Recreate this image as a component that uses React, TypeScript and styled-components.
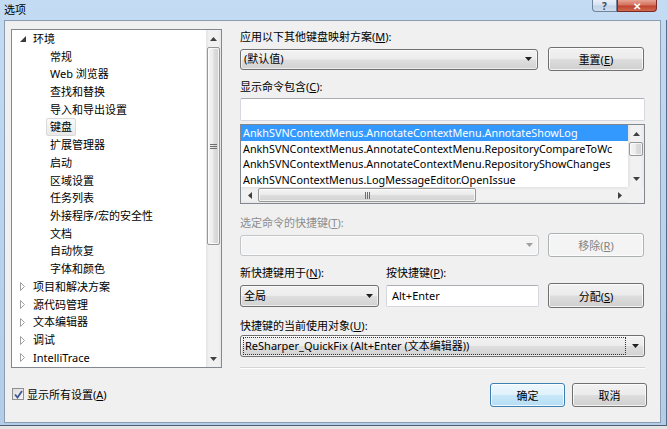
import React from "react";
import styled, { createGlobalStyle, css } from "styled-components";

const Global = createGlobalStyle`
  html, body { margin: 0; padding: 0; background: #fff; }
  body { font-family: "Noto Sans", "Noto Sans CJK SC", sans-serif; font-size: 11px; color: #000; }
  * { box-sizing: border-box; }
`;

const Window = styled.div`
  width: 667px;
  height: 429px;
  display: flex;
  flex-direction: column;
  background: linear-gradient(180deg, #c3dbf3 0%, #bcd5ee 40%, #b3cde8 100%);
  overflow: hidden;
`;

const TitleBar = styled.div`
  height: 20px;
  display: flex;
  align-items: flex-start;
  padding-left: 4px;
`;

const Title = styled.div`
  line-height: 20px;
  font-size: 11px;
  color: #000;
  flex: 1;
`;

const CaptionButton = styled.div<{ $close?: boolean }>`
  height: 12px;
  width: ${(p) => (p.$close ? 40 : 25)}px;
  display: flex;
  align-items: center;
  justify-content: center;
  border: 1px solid ${(p) => (p.$close ? "#7a2a24" : "#6f849c")};
  border-top: none;
  border-radius: ${(p) => (p.$close ? "0 0 4px 0" : "0 0 0 4px")};
  background: ${(p) =>
    p.$close
      ? "linear-gradient(180deg, #e8a493 0%, #d2725f 45%, #c14431 55%, #d06a4e 100%)"
      : "linear-gradient(180deg, #e9f0f8 0%, #d6e3f1 45%, #c3d4e8 55%, #cfdcec 100%)"};
  color: ${(p) => (p.$close ? "#fff" : "#3c4a5c")};
  font-size: 10px;
  font-weight: bold;
  line-height: 1;
`;

const CaptionGroup = styled.div`
  display: flex;
  margin-right: 10px;
`;

const Middle = styled.div`
  flex: 1;
  display: flex;
`;

const LeftFrame = styled.div`
  width: 4px;
`;

const RightFrame = styled.div`
  width: 6px;
  border-right: 1px solid #566b86;
`;

const BottomEdge = styled.div`
  height: 4px;
  border-top: 1px solid #4e5f74;
  background: #e4e4e4;
`;

const Client = styled.div`
  flex: 1;
  margin-bottom: 2px;
  background: #f0f0f0;
  border: 1px solid #8b9db3;
  padding: 8px 15px 0 6px;
  display: flex;
  gap: 18px;
`;

const LeftCol = styled.div`
  width: 211px;
  display: flex;
  flex-direction: column;
`;

const RightCol = styled.div`
  width: 405px;
  display: flex;
  flex-direction: column;
`;

/* ---------- Tree ---------- */
const TreeBox = styled.div`
  width: 211px;
  height: 339px;
  border: 1px solid #828790;
  background: #fff;
  display: flex;
`;

const TreeList = styled.div`
  flex: 1;
  overflow: hidden;
`;

const TreeRow = styled.div<{ $level: number }>`
  height: 17.72px;
  display: flex;
  align-items: center;
  padding-left: ${(p) => (p.$level === 0 ? 8 : 34)}px;
  white-space: nowrap;
`;

const Expander = styled.span`
  width: 9px;
  height: 10px;
  display: inline-flex;
  align-items: center;
`;

const TreeText = styled.span<{ $selected?: boolean }>`
  padding: 0 3px;
  line-height: 16px;
  border: 1px solid transparent;
  border-radius: 2px;
  ${(p) =>
    p.$selected &&
    css`
      border-color: #d9d9d9;
      background: linear-gradient(180deg, #fafafa 0%, #e8e8e8 100%);
    `}
`;

/* ---------- Scrollbars ---------- */
const VScroll = styled.div<{ $w: number }>`
  width: ${(p) => p.$w}px;
  display: flex;
  flex-direction: column;
  background: linear-gradient(90deg, #e3e3e3 0%, #f1f1f1 20%, #f1f1f1 80%, #e8e8e8 100%);
`;

const HScroll = styled.div`
  height: 16px;
  flex: 1;
  display: flex;
  align-items: stretch;
  background: linear-gradient(180deg, #e3e3e3 0%, #f1f1f1 20%, #f1f1f1 80%, #e8e8e8 100%);
`;

const ArrowCell = styled.div<{ $size?: number }>`
  width: ${(p) => (p.$size ? `${p.$size}px` : "auto")};
  height: ${(p) => (p.$size ? "auto" : "17px")};
  display: flex;
  align-items: center;
  justify-content: center;
  flex-shrink: 0;
`;

const Spacer = styled.div`
  flex: 1;
`;

const VThumb = styled.div<{ $h: number }>`
  height: ${(p) => p.$h}px;
  margin: 0 1px;
  border: 1px solid #979797;
  border-radius: 2px;
  background: linear-gradient(90deg, #f4f4f4 0%, #ececec 45%, #dcdcdc 55%, #d3d3d3 100%);
  box-shadow: inset 0 0 0 1px rgba(255, 255, 255, 0.7);
  display: flex;
  align-items: center;
  justify-content: center;
  flex-shrink: 0;
`;

const HThumb = styled.div<{ $w: number }>`
  width: ${(p) => p.$w}px;
  margin: 1px 0;
  border: 1px solid #979797;
  border-radius: 2px;
  background: linear-gradient(180deg, #f4f4f4 0%, #ececec 45%, #dcdcdc 55%, #d3d3d3 100%);
  box-shadow: inset 0 0 0 1px rgba(255, 255, 255, 0.7);
  display: flex;
  align-items: center;
  justify-content: center;
  flex-shrink: 0;
`;

const Corner = styled.div`
  width: 16px;
  height: 16px;
  background: #f0f0f0;
`;

/* ---------- Right controls ---------- */
const Label = styled.div<{ $mt: number; $disabled?: boolean }>`
  height: 16px;
  line-height: 16px;
  margin-top: ${(p) => p.$mt}px;
  white-space: nowrap;
  color: ${(p) => (p.$disabled ? "#8d8d8d" : "#000")};
`;

const LabelRow = styled.div<{ $mt: number }>`
  display: flex;
  margin-top: ${(p) => p.$mt}px;
`;

const FieldRow = styled.div<{ $mt: number; $h: number }>`
  display: flex;
  align-items: center;
  margin-top: ${(p) => p.$mt}px;
  height: ${(p) => p.$h}px;
  gap: 7px;
`;

const Combo = styled.div<{ $w: number; $h?: number; $disabled?: boolean }>`
  width: ${(p) => p.$w}px;
  height: ${(p) => p.$h ?? 22}px;
  display: flex;
  align-items: center;
  border: 1px solid ${(p) => (p.$disabled ? "#c3c6c9" : "#707070")};
  border-radius: 3px;
  background: ${(p) =>
    p.$disabled
      ? "#f4f4f4"
      : "linear-gradient(180deg, #f3f3f3 0%, #ececec 48%, #dedede 52%, #d2d2d2 100%)"};
  box-shadow: inset 0 0 0 1px rgba(255, 255, 255, 0.6);
  padding-left: 3px;
  flex-shrink: 0;
`;

const ComboText = styled.div<{ $focus?: boolean }>`
  flex: 1;
  white-space: nowrap;
  overflow: hidden;
  line-height: 16px;
  ${(p) =>
    p.$focus &&
    css`
      margin: 2px 0 2px -1px;
      padding-left: 1px;
      border: 1px dotted #333;
    `}
`;

const ComboArrow = styled.div`
  width: 18px;
  display: flex;
  align-items: center;
  justify-content: center;
`;

const TextBox = styled.div<{ $w: number; $h: number }>`
  width: ${(p) => p.$w}px;
  height: ${(p) => p.$h}px;
  background: #fff;
  border: 1px solid #d5d8de;
  border-top-color: #abadb3;
  border-radius: 2px;
  display: flex;
  align-items: center;
  padding-left: 5px;
  flex-shrink: 0;
`;

const Btn = styled.div<{ $w: number; $h?: number; $disabled?: boolean; $default?: boolean }>`
  width: ${(p) => p.$w}px;
  height: ${(p) => p.$h ?? 24}px;
  display: flex;
  align-items: center;
  justify-content: center;
  border: 1px solid #707070;
  border-radius: 3px;
  background: linear-gradient(180deg, #f2f2f2 0%, #ebebeb 48%, #dddddd 52%, #cfcfcf 100%);
  box-shadow: inset 0 0 0 1px rgba(255, 255, 255, 0.75);
  flex-shrink: 0;
  ${(p) =>
    p.$disabled &&
    css`
      border-color: #adb2b5;
      background: #f4f4f4;
      color: #838383;
    `}
  ${(p) =>
    p.$default &&
    css`
      border-color: #3c7fb1;
      background: linear-gradient(180deg, #eef8fd 0%, #dff1fb 48%, #c8e8f9 52%, #b5ddf3 100%);
      box-shadow: inset 0 0 0 1px rgba(255, 255, 255, 0.8);
    `}
`;

const ListBox = styled.div`
  margin-top: 3px;
  height: 80px;
  border: 1px solid #828790;
  background: #fff;
  display: flex;
  flex-direction: column;
`;

const ListTop = styled.div`
  flex: 1;
  display: flex;
  overflow: hidden;
`;

const ListItems = styled.div`
  flex: 1;
  overflow: hidden;
  font-size: 10.8px;
`;

const ListItem = styled.div<{ $selected?: boolean }>`
  height: 15.5px;
  line-height: 15.5px;
  padding-left: 2px;
  white-space: nowrap;
  overflow: hidden;
  ${(p) =>
    p.$selected &&
    css`
      background: #3399ff;
      color: #fff;
    `}
`;

const ListBottom = styled.div`
  display: flex;
`;

const Separator = styled.div`
  margin-top: 10px;
  height: 2px;
  border-top: 1px solid #d5d5d5;
  border-bottom: 1px solid #ffffff;
`;

const ButtonBar = styled.div`
  display: flex;
  justify-content: flex-end;
  gap: 7px;
  margin-top: 14px;
  margin-right: -2px;
`;

const CheckRow = styled.div`
  margin-top: 19px;
  margin-left: 1px;
  display: flex;
  align-items: center;
  gap: 3px;
  height: 14px;
`;

const CheckBox = styled.div`
  width: 12px;
  height: 12px;
  border: 1px solid #8e8f8f;
  background: linear-gradient(135deg, #dcdcdc 0%, #f6f6f6 100%);
  display: flex;
  align-items: center;
  justify-content: center;
`;

/* ---------- Icons ---------- */
const UpArrow = () => (
  <svg width="7" height="4" viewBox="0 0 7 4">
    <path d="M0 4 L3.5 0 L7 4 Z" fill="#404040" />
  </svg>
);
const DownArrow = ({ color = "#202020" }: { color?: string }) => (
  <svg width="7" height="4" viewBox="0 0 7 4">
    <path d="M0 0 L7 0 L3.5 4 Z" fill={color} />
  </svg>
);
const LeftArrowIcon = () => (
  <svg width="4" height="7" viewBox="0 0 4 7">
    <path d="M4 0 L0 3.5 L4 7 Z" fill="#404040" />
  </svg>
);
const RightArrowIcon = () => (
  <svg width="4" height="7" viewBox="0 0 4 7">
    <path d="M0 0 L4 3.5 L0 7 Z" fill="#404040" />
  </svg>
);
const VGrip = () => (
  <svg width="7" height="5" viewBox="0 0 7 5">
    <path d="M0 0.5H7M0 2.5H7M0 4.5H7" stroke="#6e6e6e" strokeWidth="1" />
  </svg>
);
const HGrip = () => (
  <svg width="5" height="7" viewBox="0 0 5 7">
    <path d="M0.5 0V7M2.5 0V7M4.5 0V7" stroke="#6e6e6e" strokeWidth="1" />
  </svg>
);
const ExpandedIcon = () => (
  <svg width="6" height="6" viewBox="0 0 6 6">
    <path d="M6 0 L6 6 L0 6 Z" fill="#3a3a3a" />
  </svg>
);
const CollapsedIcon = () => (
  <svg width="5" height="9" viewBox="0 0 5 9">
    <path d="M0.5 0.5 L4.5 4.5 L0.5 8.5 Z" fill="none" stroke="#a0a0a0" strokeWidth="1" />
  </svg>
);
const CheckMark = () => (
  <svg width="9" height="9" viewBox="0 0 9 9">
    <path d="M1 4.5 L3.5 7.5 L8 1" fill="none" stroke="#3d5794" strokeWidth="1.8" />
  </svg>
);

type TreeItem = { text: string; level: number; expander?: "open" | "closed"; selected?: boolean };

const treeItems: TreeItem[] = [
  { text: "环境", level: 0, expander: "open" },
  { text: "常规", level: 1 },
  { text: "Web 浏览器", level: 1 },
  { text: "查找和替换", level: 1 },
  { text: "导入和导出设置", level: 1 },
  { text: "键盘", level: 1, selected: true },
  { text: "扩展管理器", level: 1 },
  { text: "启动", level: 1 },
  { text: "区域设置", level: 1 },
  { text: "任务列表", level: 1 },
  { text: "外接程序/宏的安全性", level: 1 },
  { text: "文档", level: 1 },
  { text: "自动恢复", level: 1 },
  { text: "字体和颜色", level: 1 },
  { text: "项目和解决方案", level: 0, expander: "closed" },
  { text: "源代码管理", level: 0, expander: "closed" },
  { text: "文本编辑器", level: 0, expander: "closed" },
  { text: "调试", level: 0, expander: "closed" },
  { text: "IntelliTrace", level: 0, expander: "closed" },
];

const commands = [
  "AnkhSVNContextMenus.AnnotateContextMenu.AnnotateShowLog",
  "AnkhSVNContextMenus.AnnotateContextMenu.RepositoryCompareToWc",
  "AnkhSVNContextMenus.AnnotateContextMenu.RepositoryShowChanges",
  "AnkhSVNContextMenus.LogMessageEditor.OpenIssue",
];

export default function App() {
  return (
    <>
      <Global />
      <Window>
        <TitleBar>
          <Title>选项</Title>
          <CaptionGroup>
            <CaptionButton>?</CaptionButton>
            <CaptionButton $close>✕</CaptionButton>
          </CaptionGroup>
        </TitleBar>
        <Middle>
          <LeftFrame />
          <Client>
            <LeftCol>
              <TreeBox>
                <TreeList>
                  {treeItems.map((it, i) => (
                    <TreeRow key={i} $level={it.level}>
                      {it.level === 0 && (
                        <Expander>{it.expander === "open" ? <ExpandedIcon /> : <CollapsedIcon />}</Expander>
                      )}
                      <TreeText $selected={it.selected}>{it.text}</TreeText>
                    </TreeRow>
                  ))}
                </TreeList>
                <VScroll $w={15}>
                  <ArrowCell>
                    <UpArrow />
                  </ArrowCell>
                  <VThumb $h={198}>
                    <VGrip />
                  </VThumb>
                  <Spacer />
                  <ArrowCell>
                    <DownArrow color="#404040" />
                  </ArrowCell>
                </VScroll>
              </TreeBox>
              <CheckRow>
                <CheckBox>
                  <CheckMark />
                </CheckBox>
                <span>
                  显示所有设置(<u>A</u>)
                </span>
              </CheckRow>
            </LeftCol>
            <RightCol>
              <Label $mt={0}>
                应用以下其他键盘映射方案(<u>M</u>):
              </Label>
              <FieldRow $mt={2} $h={24}>
                <Combo $w={298} $h={21}>
                  <ComboText>(默认值)</ComboText>
                  <ComboArrow>
                    <DownArrow />
                  </ComboArrow>
                </Combo>
                <Btn $w={96} style={{ marginLeft: 3 }}>
                  <span>
                    重置(<u>E</u>)
                  </span>
                </Btn>
              </FieldRow>
              <Label $mt={8}>
                显示命令包含(<u>C</u>):
              </Label>
              <TextBox $w={405} $h={23} style={{ marginTop: 3 }} />
              <ListBox>
                <ListTop>
                  <ListItems>
                    {commands.map((c, i) => (
                      <ListItem key={i} $selected={i === 0}>
                        {c}
                      </ListItem>
                    ))}
                  </ListItems>
                  <VScroll $w={16}>
                    <ArrowCell>
                      <UpArrow />
                    </ArrowCell>
                    <VThumb $h={14} />
                    <Spacer />
                    <ArrowCell>
                      <DownArrow color="#404040" />
                    </ArrowCell>
                  </VScroll>
                </ListTop>
                <ListBottom>
                  <HScroll>
                    <ArrowCell $size={17}>
                      <LeftArrowIcon />
                    </ArrowCell>
                    <HThumb $w={218}>
                      <HGrip />
                    </HThumb>
                    <Spacer />
                    <ArrowCell $size={17}>
                      <RightArrowIcon />
                    </ArrowCell>
                  </HScroll>
                  <Corner />
                </ListBottom>
              </ListBox>
              <Label $mt={11} $disabled>
                选定命令的快捷键(<u>T</u>):
              </Label>
              <FieldRow $mt={2} $h={24}>
                <Combo $w={299} $h={21} $disabled>
                  <ComboText />
                  <ComboArrow>
                    <DownArrow color="#a0a0a0" />
                  </ComboArrow>
                </Combo>
                <Btn $w={96} $disabled style={{ marginLeft: 2 }}>
                  <span>
                    移除(<u>R</u>)
                  </span>
                </Btn>
              </FieldRow>
              <LabelRow $mt={8}>
                <Label $mt={0} style={{ width: 146 }}>
                  新快捷键用于(<u>N</u>):
                </Label>
                <Label $mt={0}>
                  按快捷键(<u>P</u>):
                </Label>
              </LabelRow>
              <FieldRow $mt={2} $h={25}>
                <Combo $w={139}>
                  <ComboText>全局</ComboText>
                  <ComboArrow>
                    <DownArrow />
                  </ComboArrow>
                </Combo>
                <TextBox $w={153} $h={22}>
                  Alt+Enter
                </TextBox>
                <Btn $w={96} $h={25} style={{ marginLeft: 2 }}>
                  <span>
                    分配(<u>S</u>)
                  </span>
                </Btn>
              </FieldRow>
              <Label $mt={10}>
                快捷键的当前使用对象(<u>U</u>):
              </Label>
              <Combo $w={405} $h={22} style={{ marginTop: 1 }}>
                <ComboText $focus>ReSharper_QuickFix (Alt+Enter (文本编辑器))</ComboText>
                <ComboArrow>
                  <DownArrow />
                </ComboArrow>
              </Combo>
              <Separator />
              <ButtonBar>
                <Btn $w={75} $default>
                  确定
                </Btn>
                <Btn $w={75}>取消</Btn>
              </ButtonBar>
            </RightCol>
          </Client>
          <RightFrame />
        </Middle>
        <BottomEdge />
      </Window>
    </>
  );
}
